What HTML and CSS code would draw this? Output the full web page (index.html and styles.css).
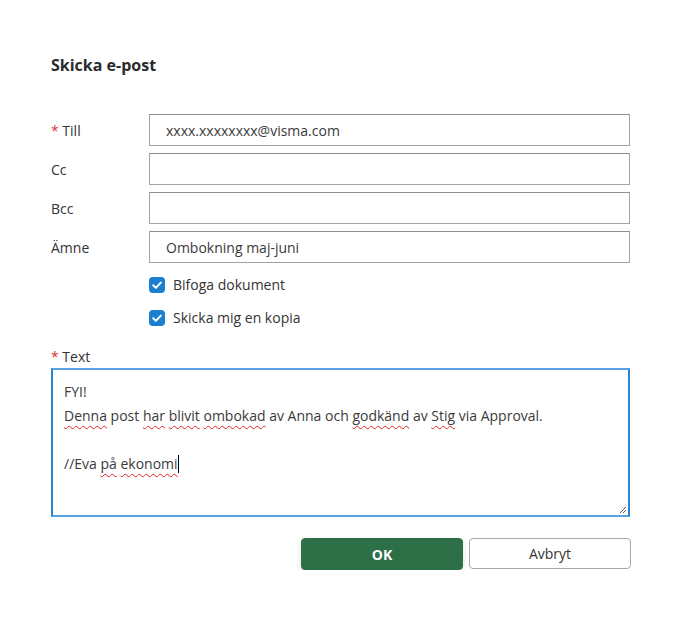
FILE: index.html
```
<!DOCTYPE html>
<html lang="sv">
<head>
<meta charset="utf-8">
<title>Skicka e-post</title>
<link rel="stylesheet" href="styles.css">
</head>
<body>
<div class="dialog">
  <h1 class="title">Skicka e-post</h1>
  <div class="fields">
    <label class="label"><span class="req">*</span> Till</label>
    <input class="field" type="text" value="xxxx.xxxxxxxx@visma.com">
    <label class="label">Cc</label>
    <input class="field" type="text" value="">
    <label class="label">Bcc</label>
    <input class="field" type="text" value="">
    <label class="label">Ämne</label>
    <input class="field" type="text" value="Ombokning maj-juni">
  </div>
  <div class="checks">
    <div class="check"><span class="box"><svg viewBox="0 0 16 16" width="16" height="16"><path d="M4.2 8.3 L6.9 10.9 L11.8 5.6" fill="none" stroke="#fff" stroke-width="2" stroke-linecap="round" stroke-linejoin="round"/></svg></span>Bifoga dokument</div>
    <div class="check"><span class="box"><svg viewBox="0 0 16 16" width="16" height="16"><path d="M4.2 8.3 L6.9 10.9 L11.8 5.6" fill="none" stroke="#fff" stroke-width="2" stroke-linecap="round" stroke-linejoin="round"/></svg></span>Skicka mig en kopia</div>
  </div>
  <div class="text-label"><span class="req">*</span> Text</div>
  <div class="textarea">
    <div class="line">FYI!</div>
    <div class="line"><span class="sp">Denna</span> post <span class="sp">har</span> <span class="sp">blivit</span> <span class="sp">ombokad</span> av Anna och <span class="sp">godkänd</span> av <span class="sp">Stig</span> via Approval.</div>
    <div class="line">&nbsp;</div>
    <div class="line">//Eva <span class="sp">på</span> <span class="sp">ekonomi</span><span class="caret"></span></div>
    <svg class="grip" viewBox="0 0 10 10" width="10" height="10"><path d="M9 3 L3 9 M9 6 L6 9" stroke="#555" stroke-width="1"/></svg>
  </div>
  <div class="buttons">
    <button class="btn ok" type="button">OK</button>
    <button class="btn cancel" type="button">Avbryt</button>
  </div>
</div>
</body>
</html>
```
FILE: styles.css
```
html, body {
  margin: 0;
  padding: 0;
  background: #fff;
}
body {
  font-family: "Open Sans", "Liberation Sans", sans-serif;
  color: #333;
  font-size: 14px;
}
.dialog {
  width: 580px;
  padding: 55px 0 0 51px;
}
.title {
  margin: 0 0 39px 0;
  font-size: 16px;
  line-height: 20px;
  font-weight: 700;
  color: #2b2b2b;
}
.fields {
  display: grid;
  grid-template-columns: 98px 481px;
  grid-auto-rows: 32px;
  row-gap: 7px;
  align-items: center;
}
.label {
  font-size: 14px;
  color: #333;
}
.req {
  color: #d9363e;
}
.field {
  box-sizing: border-box;
  height: 32px;
  width: 481px;
  margin: 0;
  border: 1px solid #a3a3a3;
  border-top-color: #8f8f8f;
  padding: 0 16px;
  font-family: inherit;
  font-size: 14px;
  color: #3a3a3a;
  background: #fff;
  outline: none;
}
.checks {
  margin: 12px 0 0 98px;
  display: flex;
  flex-direction: column;
  gap: 13px;
}
.check {
  display: flex;
  align-items: center;
  gap: 8px;
  line-height: 20px;
  color: #333;
}
.box {
  width: 16px;
  height: 16px;
  border-radius: 4px;
  background: #1a7fd0;
  display: flex;
}
.text-label {
  margin-top: 19px;
  line-height: 20px;
  color: #333;
}
.textarea {
  position: relative;
  box-sizing: border-box;
  margin-top: 1px;
  width: 579px;
  height: 149px;
  border: 2px solid #2a86d3;
  border-top-color: #5aa3e2;
  border-bottom-color: #5aa3e2;
  padding: 10px 11px;
  background: #fff;
  color: #3a3a3a;
}
.line {
  line-height: 24px;
  height: 24px;
}
.sp {
  text-decoration: underline wavy #e02020;
  text-decoration-thickness: 1px;
  text-underline-offset: 4px;
}
.caret {
  display: inline-block;
  width: 1px;
  height: 18px;
  background: #000;
  vertical-align: -4px;
}
.grip {
  position: absolute;
  right: 1px;
  bottom: 1px;
}
.buttons {
  margin-top: 21px;
  display: flex;
  justify-content: flex-end;
  gap: 6px;
}
.btn {
  box-sizing: border-box;
  width: 162px;
  height: 32px;
  border-radius: 4px;
  font-family: inherit;
  font-size: 14px;
  margin: 0;
  cursor: pointer;
}
.ok {
  background: #2d7048;
  border: 1px solid #2d7048;
  color: #fff;
  font-weight: 700;
  box-shadow: 0 3px 6px rgba(0, 0, 0, 0.12);
}
.cancel {
  background: #fff;
  border: 1px solid #a8a8a8;
  color: #333;
  height: 31px;
}
```
